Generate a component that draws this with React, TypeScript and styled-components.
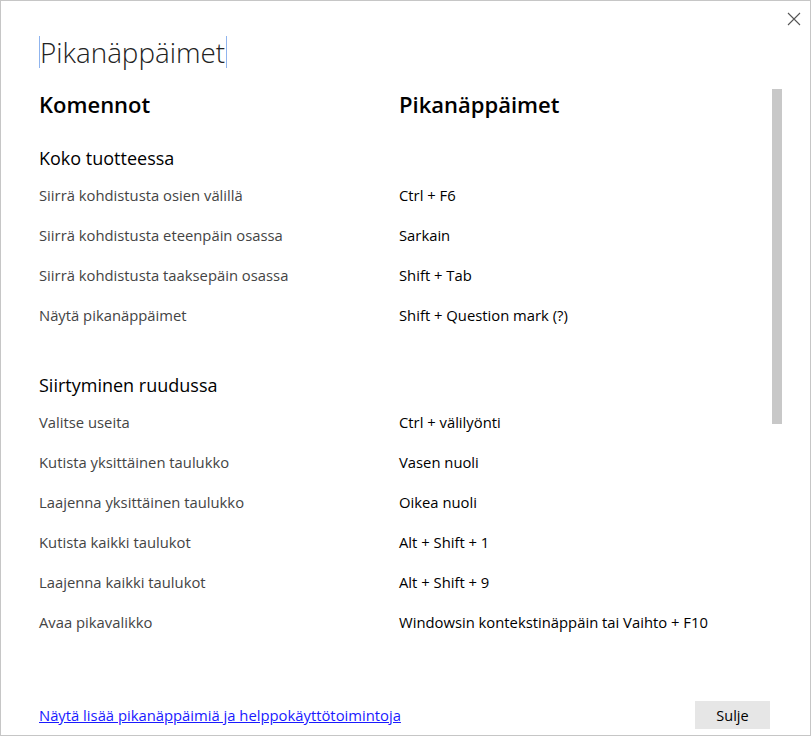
import React from "react";
import styled, { createGlobalStyle } from "styled-components";

const Global = createGlobalStyle`
  html, body { margin: 0; padding: 0; background: #ffffff; }
  body { font-family: "Segoe UI", "Open Sans", "Noto Sans", sans-serif; }
  * { box-sizing: border-box; }
`;

const Dialog = styled.div`
  position: relative;
  width: 811px;
  height: 736px;
  border: 1px solid #c6c6c6;
  background: #fff;
  display: flex;
  flex-direction: column;
  font-family: "Segoe UI", "Open Sans", "Noto Sans", sans-serif;
`;

const CloseButton = styled.button`
  position: absolute;
  top: 8px;
  right: 6px;
  width: 20px;
  height: 20px;
  padding: 0;
  border: none;
  background: transparent;
  display: flex;
  align-items: center;
  justify-content: center;
`;

const TitleRow = styled.div`
  padding: 35px 0 0 38px;
  height: 83px;
`;

const Title = styled.h1`
  display: inline-block;
  margin: 0;
  font-size: 27.8px;
  font-weight: 300;
  line-height: 32px;
  color: #222;
  border-left: 1px solid #8fb4ee;
  border-right: 1px solid #8fb4ee;
  padding: 0 1px 0 0;
`;

const Body = styled.div`
  flex: 1;
  display: flex;
  min-height: 0;
`;

const Content = styled.div`
  flex: 1;
  padding-left: 38px;
  overflow: hidden;
`;

const Track = styled.div`
  width: 10px;
  margin-right: 28px;
  padding-top: 5px;
`;

const Thumb = styled.div`
  width: 10px;
  height: 335px;
  background: #c8c8c8;
`;

const Grid = styled.div`
  display: grid;
  grid-template-columns: 360px 1fr;
`;

const ColHeader = styled.div`
  font-size: 22px;
  font-weight: 600;
  color: #000;
  height: 40px;
  line-height: 40px;
`;

const SectionHeading = styled.div<{ $first?: boolean }>`
  grid-column: 1 / span 2;
  font-size: 18px;
  color: #000;
  height: 34px;
  line-height: 34px;
  margin-top: ${(p) => (p.$first ? "17px" : "33px")};
`;

const Cell = styled.div<{ $key?: boolean }>`
  font-size: 14.8px;
  height: 40px;
  line-height: 40px;
  color: ${(p) => (p.$key ? "#000" : "#444")};
  white-space: nowrap;
`;

const Footer = styled.div`
  height: 70px;
  display: flex;
  align-items: center;
  justify-content: space-between;
  padding: 30px 40px 0 38px;
`;

const MoreLink = styled.a`
  font-size: 14.8px;
  color: #1a1aff;
  text-decoration: underline;
`;

const CloseAction = styled.button`
  width: 75px;
  height: 28px;
  border: none;
  background: #e6e6e6;
  font-family: inherit;
  font-size: 14.5px;
  color: #000;
`;

const sections = [
  {
    title: "Koko tuotteessa",
    rows: [
      ["Siirrä kohdistusta osien välillä", "Ctrl + F6"],
      ["Siirrä kohdistusta eteenpäin osassa", "Sarkain"],
      ["Siirrä kohdistusta taaksepäin osassa", "Shift + Tab"],
      ["Näytä pikanäppäimet", "Shift + Question mark (?)"],
    ],
  },
  {
    title: "Siirtyminen ruudussa",
    rows: [
      ["Valitse useita", "Ctrl + välilyönti"],
      ["Kutista yksittäinen taulukko", "Vasen nuoli"],
      ["Laajenna yksittäinen taulukko", "Oikea nuoli"],
      ["Kutista kaikki taulukot", "Alt + Shift + 1"],
      ["Laajenna kaikki taulukot", "Alt + Shift + 9"],
      ["Avaa pikavalikko", "Windowsin kontekstinäppäin tai Vaihto + F10"],
    ],
  },
];

export default function App() {
  return (
    <>
      <Global />
      <Dialog>
        <CloseButton aria-label="Sulje">
          <svg width="14" height="14" viewBox="0 0 14 14">
            <path d="M1 1 L13 13 M13 1 L1 13" stroke="#555" strokeWidth="1.1" fill="none" />
          </svg>
        </CloseButton>
        <TitleRow>
          <Title>Pikanäppäimet</Title>
        </TitleRow>
        <Body>
          <Content>
            <Grid>
              <ColHeader>Komennot</ColHeader>
              <ColHeader>Pikanäppäimet</ColHeader>
              {sections.map((s, i) => (
                <React.Fragment key={s.title}>
                  <SectionHeading $first={i === 0}>{s.title}</SectionHeading>
                  {s.rows.map(([cmd, key]) => (
                    <React.Fragment key={cmd}>
                      <Cell>{cmd}</Cell>
                      <Cell $key>{key}</Cell>
                    </React.Fragment>
                  ))}
                </React.Fragment>
              ))}
            </Grid>
          </Content>
          <Track>
            <Thumb />
          </Track>
        </Body>
        <Footer>
          <MoreLink href="#">Näytä lisää pikanäppäimiä ja helppokäyttötoimintoja</MoreLink>
          <CloseAction>Sulje</CloseAction>
        </Footer>
      </Dialog>
    </>
  );
}
